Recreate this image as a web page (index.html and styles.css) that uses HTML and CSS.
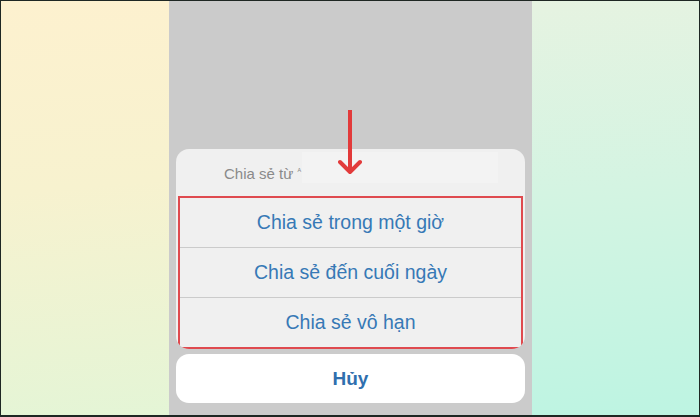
FILE: index.html
```html
<!DOCTYPE html>
<html lang="vi">
<head>
<meta charset="utf-8">
<title>Chia sẻ</title>
<link rel="stylesheet" href="styles.css">
</head>
<body>
<div class="frame">
  <div class="side side-left"></div>
  <div class="phone">
    <div class="sheet">
      <div class="sheet-title">
        <span class="title-text">Chia sẻ từ <span class="title-mark">ᴬ</span></span>
        <span class="blurred"></span>
      </div>
      <div class="options">
        <div class="option">Chia sẻ trong một giờ</div>
        <div class="option">Chia sẻ đến cuối ngày</div>
        <div class="option">Chia sẻ vô hạn</div>
      </div>
    </div>
    <div class="cancel">Hủy</div>
    <svg class="arrow" width="24" height="66" viewBox="0 0 24 66" aria-hidden="true">
      <line x1="12" y1="0" x2="12" y2="60" stroke="#e23a3a" stroke-width="4"/>
      <polyline points="2,52 12,62 22,52" fill="none" stroke="#e23a3a" stroke-width="4" stroke-linecap="round" stroke-linejoin="round"/>
    </svg>
  </div>
  <div class="side side-right"></div>
</div>
</body>
</html>
```
FILE: styles.css
```css
html, body {
  margin: 0;
  padding: 0;
}
body {
  width: 700px;
  height: 417px;
  overflow: hidden;
  font-family: "Liberation Sans", Arial, sans-serif;
}
.frame {
  box-sizing: border-box;
  width: 700px;
  height: 417px;
  display: flex;
  border: 1px solid #1e2723;
  border-bottom-width: 2px;
}
.side {
  flex: 0 0 168px;
}
.side-left {
  background: linear-gradient(175deg, #fdf1cf 0%, #f7f2cf 45%, #e4f5d6 100%);
}
.side-right {
  flex-basis: 167px;
  background: linear-gradient(175deg, #e6f3e1 0%, #d4f4e2 45%, #bdf4e2 100%);
}
.phone {
  position: relative;
  flex: 0 0 363px;
  box-sizing: border-box;
  background: #cbcbcb;
  padding: 0 7px 12px;
  display: flex;
  flex-direction: column;
  justify-content: flex-end;
}
.sheet {
  background: #f0f0f0;
  border-radius: 13px;
  overflow: hidden;
}
.sheet-title {
  height: 47px;
  display: flex;
  align-items: center;
  padding-left: 48px;
  position: relative;
}
.title-text {
  font-size: 15px;
  color: #8a8a8a;
  padding-top: 2px;
}
.title-mark {
  font-size: 8px;
  vertical-align: 5px;
}
.blurred {
  position: absolute;
  left: 126px;
  top: 3px;
  width: 196px;
  height: 31px;
  background: #f3f3f3;
}
.options {
  margin: 0 2px;
  border: 2px solid #df4a4f;
}
.option {
  height: 49px;
  display: flex;
  align-items: center;
  justify-content: center;
  font-size: 19.5px;
  color: #3779b6;
}
.option + .option {
  border-top: 1px solid #cbcbcb;
}
.cancel {
  margin-top: 5px;
  height: 49px;
  background: #ffffff;
  border-radius: 13px;
  display: flex;
  align-items: center;
  justify-content: center;
  font-size: 19px;
  font-weight: bold;
  color: #2f6fae;
}
.arrow {
  position: absolute;
  left: 169px;
  top: 109px;
}
```
